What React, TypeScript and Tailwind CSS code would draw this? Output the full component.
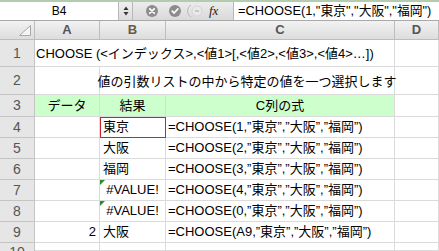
import type { ReactNode } from 'react'

const font = { fontFamily: "'Liberation Sans', 'Noto Sans CJK JP', sans-serif" }

const line = 'border-r border-b border-[#dadada]'

function RowHead({ n }: { n: number | string }) {
  return (
    <div className="flex items-center justify-center border-r border-b border-[#c4c4c4] bg-[#e6e6e6] text-[14px] text-[#555]">
      {n}
    </div>
  )
}

function ColHead({ label, active }: { label: string; active?: boolean }) {
  return (
    <div
      className={`flex items-center justify-center border-r border-b border-[#bdbdbd] bg-gradient-to-b from-[#f2f2f2] to-[#dddddd] text-[13px] font-bold ${
        active ? 'text-[#6b5a43]' : 'text-[#555]'
      }`}
    >
      {label}
    </div>
  )
}

function Cell({ children, className = '' }: { children?: ReactNode; className?: string }) {
  return (
    <div className={`flex items-center overflow-visible whitespace-nowrap text-[13px] text-black ${line} ${className}`}>
      {children}
    </div>
  )
}

function ErrCell() {
  return (
    <Cell className="relative justify-center">
      <span className="absolute left-0 top-0 h-0 w-0 border-t-[5px] border-r-[5px] border-t-[#2f8a2f] border-r-transparent" />
      #VALUE!
    </Cell>
  )
}

function Formula({ arg }: { arg: string }) {
  return <Cell className="pl-[2px] text-[12.6px]">{`=CHOOSE(${arg},”東京”,”大阪”,”福岡”)`}</Cell>
}

export default function App() {
  return (
    <div className="h-[251px] w-[439px] overflow-hidden bg-white" style={font}>
      <div className="h-[2px] bg-[#b3cbaf]" />
      {/* formula bar */}
      <div className="flex h-[19px] border-b border-[#a9a9a9]">
        <div className="flex w-[118px] items-center justify-center bg-white text-[12px] text-black">B4</div>
        <div className="flex w-[15px] items-center justify-center border-r border-l border-[#b8b8b8] bg-gradient-to-b from-[#f0f0f0] to-[#dcdcdc]">
          <svg width="6" height="10" viewBox="0 0 6 10">
            <path d="M3 0.5 L5.5 4 H0.5 Z M3 9.5 L5.5 6 H0.5 Z" fill="#333" />
          </svg>
        </div>
        <div className="flex w-[101px] items-center border-r border-[#b8b8b8] bg-gradient-to-b from-[#ececec] to-[#d9d9d9] pl-[13px]">
          <svg width="12" height="12" viewBox="0 0 12 12">
            <circle cx="6" cy="6" r="6" fill="#8c8c8c" />
            <path d="M3.8 3.8 L8.2 8.2 M8.2 3.8 L3.8 8.2" stroke="#fff" strokeWidth="1.8" strokeLinecap="round" />
          </svg>
          <svg width="12" height="12" viewBox="0 0 12 12" className="ml-[11px]">
            <circle cx="6" cy="6" r="6" fill="#8c8c8c" />
            <path d="M3.3 6.2 L5.2 8 L8.8 4" stroke="#fff" strokeWidth="1.8" fill="none" strokeLinecap="round" strokeLinejoin="round" />
          </svg>
          <svg width="18" height="14" viewBox="0 0 18 14" className="ml-[6px]">
            <path d="M4 1 A 7 7 0 0 0 4 13" stroke="#b5b5b5" strokeWidth="1" fill="none" />
            <circle cx="10" cy="7" r="5" fill="#e9e9e9" stroke="#cfcfcf" strokeWidth="0.8" />
            <path d="M8 7 H12" stroke="#b0b0b0" strokeWidth="1.2" />
          </svg>
          <span
            className="ml-[4px] text-[13px] italic text-[#222]"
            style={{ fontFamily: "'Liberation Serif', serif" }}
          >
            fx
          </span>
        </div>
        <div className="flex flex-1 items-center bg-white pl-[4px] text-[12.8px] text-black">
          =CHOOSE(1,"東京","大阪","福岡")
        </div>
      </div>

      {/* sheet */}
      <div className="grid grid-cols-[35px_65px_66px_229px_44px] grid-rows-[19px_27px_28px_22px_21px_21px_21px_21px_21px_21px_8px]">
        <div className="flex items-end justify-end border-r border-b border-[#bdbdbd] bg-gradient-to-b from-[#f2f2f2] to-[#dddddd] pr-[3px] pb-[3px]">
          <svg width="12" height="11" viewBox="0 0 12 11">
            <path d="M11.5 0.5 V10.5 H0.5 Z" fill="#f4f4f4" stroke="#a8a8a8" strokeWidth="1" />
          </svg>
        </div>
        <ColHead label="A" />
        <ColHead label="B" active />
        <ColHead label="C" />
        <ColHead label="D" />

        {/* row 1 */}
        <RowHead n={1} />
        <Cell className="col-span-3 pl-[1px] pt-[1px]">CHOOSE (&lt;インデックス&gt;,&lt;値1&gt;[,&lt;値2&gt;,&lt;値3&gt;,&lt;値4&gt;…])</Cell>
        <Cell />

        {/* row 2 */}
        <RowHead n={2} />
        <Cell />
        <Cell className="col-span-2 justify-center pt-[2px]">値の引数リストの中から特定の値を一つ選択します</Cell>
        <Cell />

        {/* row 3 */}
        <RowHead n={3} />
        <Cell className="justify-center bg-[#ccffcc]">データ</Cell>
        <Cell className="justify-center bg-[#ccffcc]">結果</Cell>
        <Cell className="justify-center bg-[#ccffcc]">C列の式</Cell>
        <Cell />

        {/* row 4 */}
        <RowHead n={4} />
        <Cell />
        <Cell className="pl-[3px] outline outline-1 -outline-offset-1 outline-[#c8262e]">東京</Cell>
        <Formula arg="1" />
        <Cell />

        <RowHead n={5} />
        <Cell />
        <Cell className="pl-[3px]">大阪</Cell>
        <Formula arg="2" />
        <Cell />

        <RowHead n={6} />
        <Cell />
        <Cell className="pl-[3px]">福岡</Cell>
        <Formula arg="3" />
        <Cell />

        <RowHead n={7} />
        <Cell />
        <ErrCell />
        <Formula arg="4" />
        <Cell />

        <RowHead n={8} />
        <Cell />
        <ErrCell />
        <Formula arg="0" />
        <Cell />

        <RowHead n={9} />
        <Cell className="justify-end pr-[3px]">2</Cell>
        <Cell className="pl-[3px]">大阪</Cell>
        <Formula arg="A9" />
        <Cell />

        <div className="flex items-start justify-center overflow-hidden border-r border-[#c4c4c4] bg-[#e6e6e6] pt-[2px] text-[14px] leading-none text-[#555]">
          10
        </div>
        <Cell />
        <Cell />
        <Cell />
        <Cell />
      </div>
    </div>
  )
}
